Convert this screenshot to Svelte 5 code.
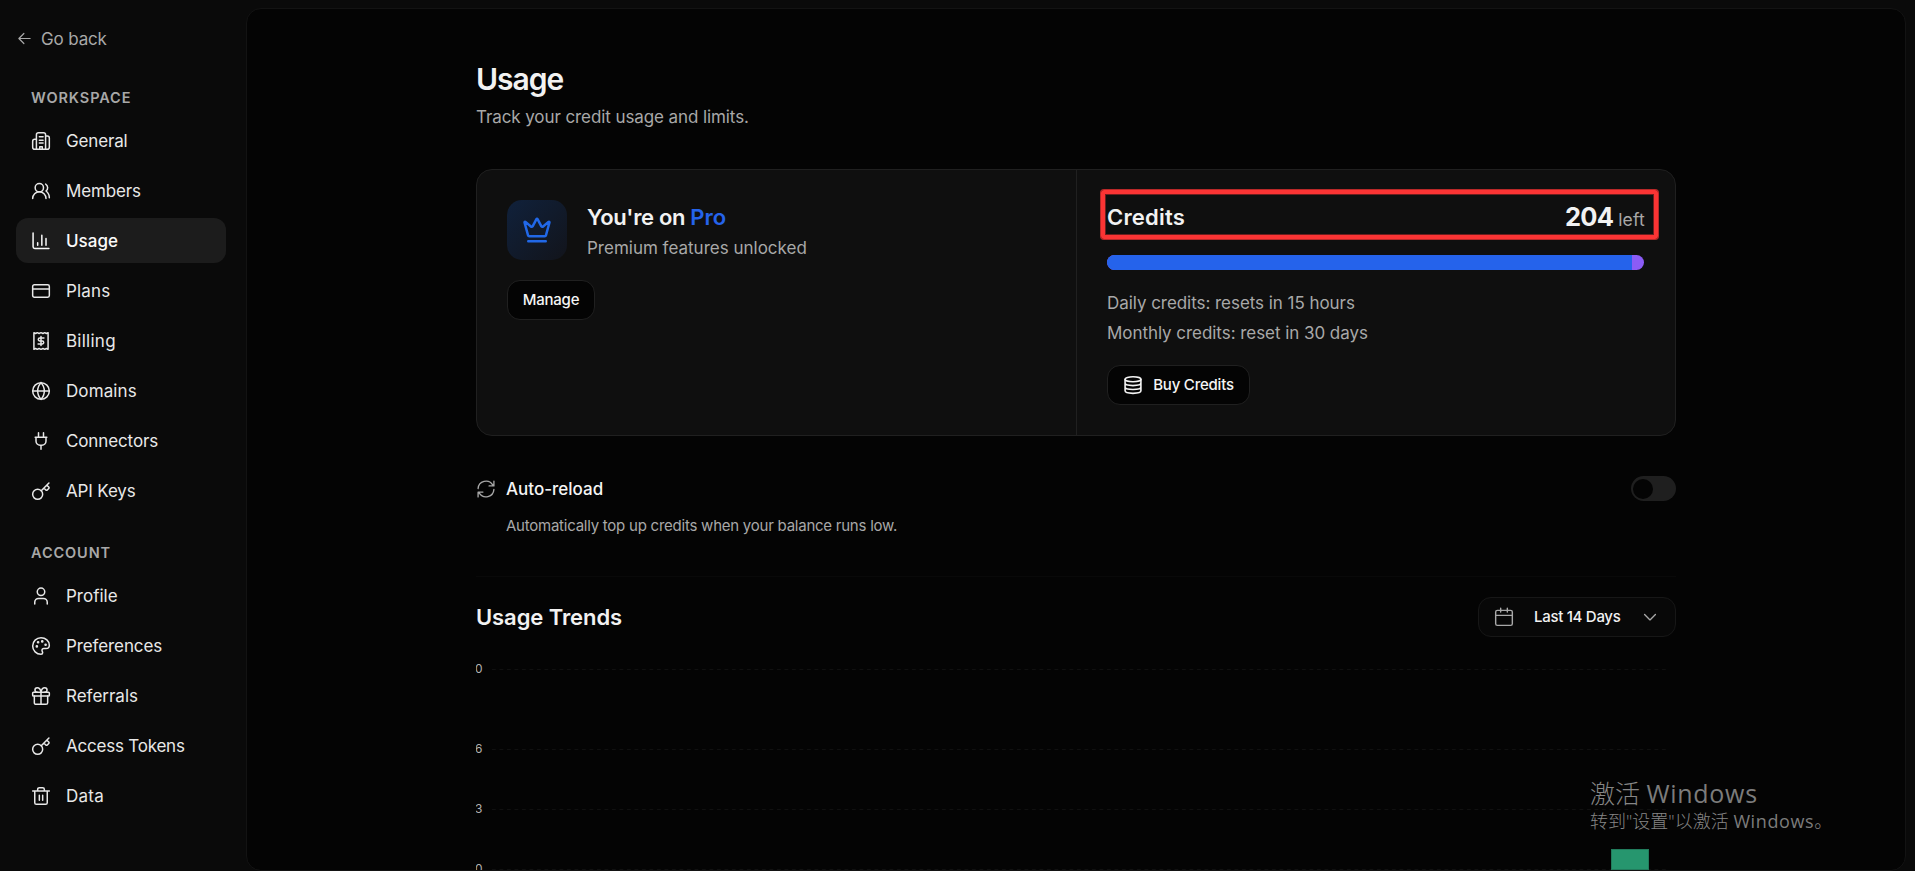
<script>
  const I = {
    building: '<path d="M6.500 22V4.500A2.500 2.500 0 0 1 9 2h6a2.500 2.500 0 0 1 2.500 2.500V22"/><path d="M6.500 10H4.500A2.500 2.500 0 0 0 2 12.500V19.500A2.500 2.500 0 0 0 4.500 22h15a2.500 2.500 0 0 0 2.500-2.500V8.500A2.500 2.500 0 0 0 19.500 6h-2"/><path d="M10 7h4.500M10 11h4.500M10 14.500h4.500M10.500 22v-3h3v3"/>',
    users: '<path d="M18 21a8 8 0 0 0-16 0"/><circle cx="10" cy="8" r="5"/><path d="M22 20c0-3.370-2-6.500-4-8a5 5 0 0 0-.450-8.300"/>',
    chart: '<path d="M2.500 2.500V19a2 2 0 0 0 2 2H21.500M18 17V9M13 17V5M8 17v-3"/>',
    card: '<rect x="2" y="4.500" width="20" height="15" rx="2"/><path d="M2 9.500h20"/>',
    receipt: '<path d="M3.500 2l2 1 2-1 2.200 1L12 2l2.300 1 2.200-1 2 1 2-1v20l-2-1-2 1-2.200-1L12 22l-2.300-1-2.200 1-2-1-2 1z"/><path d="M15.500 8.500h-5a1.750 1.750 0 0 0 0 3.500h3a1.750 1.750 0 0 1 0 3.500h-5M12 6.500v11"/>',
    globe: '<circle cx="12" cy="12" r="10"/><path d="M12 2a14.500 14.500 0 0 0 0 20 14.500 14.500 0 0 0 0-20M2 12h20"/>',
    plug: '<path d="M12 22v-5M9 7.500V2M15 7.500V2M5 7.500h14M18 7.500V12a5 5 0 0 1-5 5h-2a5 5 0 0 1-5-5V7.500"/>',
    key: '<circle cx="8" cy="16" r="6"/><path d="M12.300 11.700L21.500 2.500M15.500 8.500l2.300 2.300a1.200 1.200 0 0 0 1.700 0l1.800-1.800a1.200 1.200 0 0 0 0-1.700L19 5"/>',
    user: '<circle cx="12" cy="7" r="4.500"/><path d="M4.500 21.500v-2a4.500 4.500 0 0 1 4.500-4.500h6a4.500 4.500 0 0 1 4.500 4.500v2"/>',
    palette: '<path d="M12 2a10 10 0 0 0 0 20c1.300 0 2-.8 2-1.800 0-1.200-.8-1.700-.8-3 0-1.200.9-2.200 2.300-2.200H18c2.500 0 4-1.500 4-4C22 6 17.500 2 12 2z"/><g fill="currentColor"><circle cx="7" cy="12.500" r=".7"/><circle cx="8.500" cy="7.500" r=".7"/><circle cx="13.500" cy="6.500" r=".7"/><circle cx="17.500" cy="10.500" r=".7"/></g>',
    gift: '<rect x="2" y="7.500" width="20" height="4.500" rx="1"/><path d="M12 7.500V22M20 12v8a2 2 0 0 1-2 2H6a2 2 0 0 1-2-2v-8M7.500 7.500a2.500 2.500 0 0 1 0-5.500C10 2 11.500 4 12 7.500 12.500 4 14 2 16.500 2a2.500 2.500 0 0 1 0 5.500"/>',
    trash: '<path d="M2 6h20M4.500 6v14a2 2 0 0 0 2 2h11a2 2 0 0 0 2-2V6M8 6V4a2 2 0 0 1 2-2h4a2 2 0 0 1 2 2v2M10 11v6M14 11v6"/>',
    back: '<path d="M21 12H3M11 4l-8 8 8 8"/>',
    crown: '<path d="M11.560 3.270a.5.5 0 0 1 .880 0L15.390 8.870a1 1 0 0 0 1.520.290L21.180 5.500a.5.5 0 0 1 .8.520l-2.830 10.250a1 1 0 0 1-.960.730H5.810a1 1 0 0 1-.960-.730L2.020 6.020a.5.5 0 0 1 .8-.520l4.280 3.660a1 1 0 0 0 1.520-.290zM5 21h14"/>',
    coins: '<ellipse cx="12" cy="5" rx="9.500" ry="3"/><path d="M2.500 5v14c0 1.700 4.200 3 9.500 3s9.500-1.300 9.500-3V5M2.500 9.700c0 1.700 4.200 3 9.500 3s9.500-1.300 9.500-3M2.500 14.300c0 1.700 4.200 3 9.500 3s9.500-1.300 9.500-3"/>',
    refresh: '<path d="M2.500 11.500A9.500 9.500 0 0 1 20 7l1.500 1.300M21.500 2.500v5.800h-5.800M21.500 12.500A9.500 9.500 0 0 1 4 17l-1.500-1.300M2.500 21.500v-5.800h5.800"/>',
    calendar: '<rect x="2" y="4" width="20" height="18" rx="2"/><path d="M2 10h20M8 1.500V6M16 1.500V6"/>',
    down: '<path d="M5.500 9l6.500 6.500L18.500 9"/>'
  };
  // label, icon, tracking in px
  const groups = [
    { title: 'WORKSPACE', items: [['General', 'building', -0.15], ['Members', 'users', -0.15], ['Usage', 'chart', 0], ['Plans', 'card', 0.15], ['Billing', 'receipt', 0.25], ['Domains', 'globe', 0.1], ['Connectors', 'plug', -0.12], ['API Keys', 'key', -0.15]] },
    { title: 'ACCOUNT', items: [['Profile', 'user', 0], ['Preferences', 'palette', -0.1], ['Referrals', 'gift', 0], ['Access Tokens', 'key', -0.22], ['Data', 'trash', 0.25]] }
  ];
  const ticks = [{ v: '10', h: 80 }, { v: '6', h: 60 }, { v: '3', h: 60 }, { v: '0', h: 20 }];
</script>

{#snippet icon(name, size = 20, sw = 1.8)}
  <svg width={size} height={size} viewBox="0 0 24 24" fill="none" stroke="currentColor" stroke-width={sw} stroke-linecap="round" stroke-linejoin="round" aria-hidden="true">{@html I[name]}</svg>
{/snippet}

<div class="app">
  <aside>
    <div class="back">{@render icon('back', 15, 1.9)}<span>Go back</span></div>
    {#each groups as g}
      <section>
        <h3>{g.title}</h3>
        <nav>
          {#each g.items as [label, ic, ls]}
            <div class="item" class:active={label === 'Usage'}>{@render icon(ic)}<span style="letter-spacing:{ls}px">{label}</span></div>
          {/each}
        </nav>
      </section>
    {/each}
  </aside>

  <main>
    <div class="content">
      <h1>Usage</h1>
      <p class="sub">Track your credit usage and limits.</p>

      <div class="card">
        <div class="plan">
          <div class="planhead">
            <div class="tile">{@render icon('crown', 30, 2)}</div>
            <div>
              <h2 class="on">You're on <b>Pro</b></h2>
              <p class="premium">Premium features unlocked</p>
            </div>
          </div>
          <button class="manage">Manage</button>
        </div>
        <div class="credits">
          <div class="chead">
            <h2>Credits</h2>
            <div class="amount"><strong>204</strong><span>left</span></div>
            <div class="outline"></div>
          </div>
          <div class="bar"><i></i></div>
          <p class="daily">Daily credits: resets in 15 hours</p>
          <p class="monthly">Monthly credits: reset in 30 days</p>
          <button class="buy">{@render icon('coins', 20, 1.9)}<span>Buy Credits</span></button>
        </div>
      </div>

      <div class="reload">
        <div class="ricon">{@render icon('refresh', 20, 1.6)}</div>
        <div class="rtext">
          <h4>Auto-reload</h4>
          <p>Automatically top up credits when your balance runs low.</p>
        </div>
        <div class="toggle"><i></i></div>
      </div>

      <div class="trends">
        <h2>Usage Trends</h2>
        <div class="select">{@render icon('calendar', 20, 1.7)}<span>Last 14 Days</span>{@render icon('down', 20, 1.6)}</div>
      </div>

      <div class="chart">
        {#each ticks as t}
          <div class="tick" style="height:{t.h}px">
            <div class="label"><span>{t.v}</span></div>
            <svg width="1174" height="1"><line x1="0" y1=".5" x2="1174" y2=".5" stroke="#101010" stroke-dasharray="3.75 3.75" /></svg>
          </div>
        {/each}
        <div class="column"></div>
      </div>
    </div>
  </main>

  <div class="watermark">
    <div class="w1">激活 <b>Windows</b></div>
    <div class="w2">转到"设置"以激活 <b>Windows</b>。</div>
  </div>
</div>

<style>
  :global(body) { background: #0a0a0a; }
  * { box-sizing: border-box; }
  h1, h2, h3, h4, p { margin: 0; font-weight: 600; }
  p { font-weight: 400; }
  svg { display: block; flex: none; }
  span, h1, h2, h3, h4, p { white-space: nowrap; }
  .app {
    display: flex; width: 1915px; height: 871px; overflow: hidden; position: relative;
    background: #0a0a0a; color: #f2f2f2; font-family: Inter, "Liberation Sans", sans-serif; font-size: 17px;
  }
  aside { width: 246px; flex: none; padding: 24px 20px 0 16px; }
  .back { display: flex; align-items: center; gap: 8px; height: 30px; padding-left: 2px; color: #a8a8a8; }
  .back svg { margin: -2px 0 0 -1px; }
  .back span { margin-left: 1px; letter-spacing: -.15px; }
  section { padding-top: 31px; }
  section h3 { height: 26px; line-height: 26px; padding-left: 15px; font-size: 14.500px; letter-spacing: .9px; color: #a8a8a8; }
  section + section { padding-top: 27px; }
  nav { display: flex; flex-direction: column; gap: 5px; margin-top: 7px; }
  .item { display: flex; align-items: center; gap: 15px; height: 45px; padding-left: 15px; border-radius: 12px; color: #e8e8e8; }
  .active { background: #1c1c1c; color: #fafafa; font-weight: 500; }
  main {
    width: 1660px; height: 863px; margin-top: 8px; flex: none; border: 1px solid #131313;
    border-radius: 15px; background: #040404; padding-left: 229px; overflow: hidden;
  }
  .content { width: 1200px; }
  h1 { padding-top: 51px; font-size: 30px; line-height: 38px; letter-spacing: -1px; }
  .sub { margin-top: 6px; line-height: 26px; letter-spacing: -.09px; color: #a8a8a8; }
  .card { margin-top: 39px; height: 267px; display: flex; border: 1px solid #202020; border-radius: 16px; background: #0f0f0f; }
  .plan { width: 600px; border-right: 1px solid #202020; padding: 30px; }
  .planhead { display: flex; gap: 20px; height: 60px; }
  .tile { width: 60px; height: 60px; border-radius: 15px; display: grid; place-items: center; color: #2168e8; background: linear-gradient(135deg, #10213b, #12141b); }
  h2 { font-size: 22px; line-height: 34px; letter-spacing: .2px; }
  .on { letter-spacing: -.34px; }
  .on b { color: #2563eb; font-weight: 600; letter-spacing: 0; }
  .premium { padding-top: 1px; line-height: 26px; color: #a8a8a8; }
  button {
    display: flex; align-items: center; justify-content: center; height: 40px; border: 1px solid #202020; border-radius: 13px;
    background: #040404; color: #f5f5f5; font: 500 15px Inter, "Liberation Sans", sans-serif; padding: 0 0 1px; letter-spacing: -.22px;
  }
  .manage { width: 88px; margin-top: 20px; }
  .credits { flex: 1; padding: 30px 30px 0 30px; }
  .chead { position: relative; display: flex; justify-content: space-between; height: 35px; }
  .amount { display: flex; align-items: baseline; gap: 5px; line-height: 34px; }
  .amount strong { font-size: 25.500px; font-weight: 700; letter-spacing: -.8px; }
  .amount span { color: #a8a8a8; font-size: 17.500px; letter-spacing: .2px; }
  .outline { position: absolute; left: -6px; top: -10px; width: 557px; height: 49px; border: 4px solid #fb3434; border-radius: 3px; box-shadow: 0 0 0 1px #b82828, inset 0 0 0 1px #6e1e1e; }
  .bar { width: 537px; height: 15px; margin-top: 20px; border-radius: 8px; overflow: hidden; background: #8b5cf6; }
  .bar i { display: block; width: 525px; height: 15px; background: #2563eb; }
  .daily, .monthly { line-height: 30px; letter-spacing: -.05px; color: #a8a8a8; }
  .daily { margin-top: 18px; }
  .buy { width: 143px; margin-top: 17px; gap: 10px; }
  .reload { display: flex; height: 141px; border-bottom: 1px solid #090909; padding-top: 39px; }
  .ricon { width: 30px; padding-top: 4px; color: #a8a8a8; }
  .rtext { flex: 1; }
  .rtext h4 { font-weight: 500; line-height: 28px; color: #f5f5f5; }
  .rtext p { margin-top: 11px; font-size: 15px; line-height: 24px; letter-spacing: -.24px; color: #a8a8a8; }
  .toggle { width: 45px; height: 25px; margin-top: 1px; border-radius: 13px; background: #1f1f1f; padding: 2.500px 2px; }
  .toggle i { display: block; width: 20px; height: 20px; border-radius: 50%; background: #040404; }
  .trends { display: flex; justify-content: space-between; align-items: center; margin-top: 20px; height: 40px; }
  .trends h2 { letter-spacing: -.08px; }
  .select { display: flex; align-items: center; width: 198px; height: 40px; border: 1px solid #171717; border-radius: 13px; background: #080808; padding-left: 15px; color: #a8a8a8; }
  .select span { width: 88px; margin: -1px 19px 0 20px; color: #f2f2f2; font-size: 15px; font-weight: 500; letter-spacing: -.3px; }
  .select svg:last-child { margin-left: -1px; }
  .chart { margin-top: 24px; position: relative; }
  .tick { display: flex; align-items: flex-start; }
  .label { display: flex; justify-content: flex-end; width: 6.500px; margin-right: 9.500px; overflow: hidden; }
  .label span { line-height: 16px; font-size: 12px; letter-spacing: 0; color: #b0b0b0; }
  .tick svg { margin-top: 8px; }
  .column { position: absolute; left: 1135px; top: 188px; width: 38px; height: 21px; background: #26966e; border: 1px solid #217c5c; }
  .watermark { position: absolute; left: 1590px; top: 776px; color: #868686; font-family: "Open Sans", "Noto Sans CJK SC", sans-serif; font-weight: 300; white-space: nowrap; }
  .w1 { font-size: 25px; line-height: 34px; }
  .w2 { font-size: 18px; line-height: 22px; }
  .watermark b { font-weight: 400; color: #7c7c7c; }
  .w1 b { letter-spacing: .7px; }
  .w2 b { letter-spacing: .6px; }
</style>
